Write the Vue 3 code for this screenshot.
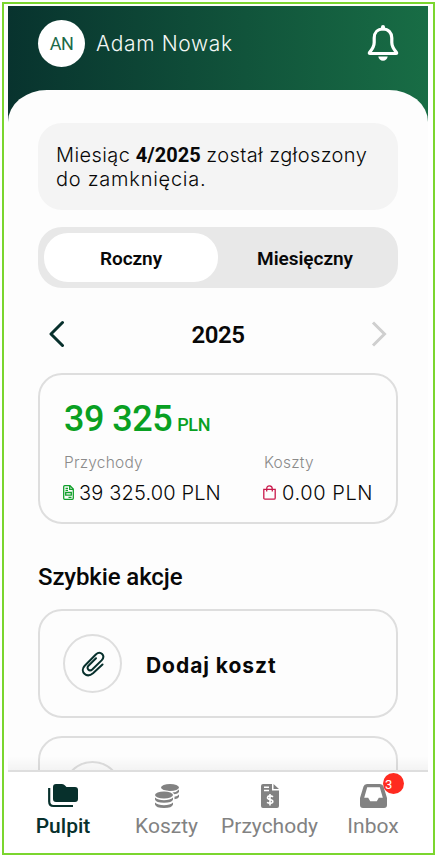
<script setup>
const tabs = [
  { id: 'pulpit', label: 'Pulpit' },
  { id: 'koszty', label: 'Koszty' },
  { id: 'przychody', label: 'Przychody' },
  { id: 'inbox', label: 'Inbox', badge: 3 },
]
</script>

<template>
  <div class="frame">
    <div class="phone">
      <header class="top">
        <div class="avatar">AN</div>
        <div class="name">Adam Nowak</div>
        <svg class="bell" width="32" height="38" viewBox="0 0 32 38" fill="none">
          <path d="M16 5C10.500 5 7.200 8.800 7.200 14V18.500C7.200 23 5 25.500 2.500 28.500Q2 29.500 3 29.500H29Q30 29.500 29.500 28.500C27 25.500 24.800 23 24.800 18.500V14C24.800 8.800 21.500 5 16 5Z" stroke="#fff" stroke-width="3.200" stroke-linejoin="round" />
          <path d="M16 4.500V3" stroke="#fff" stroke-width="4" stroke-linecap="round" />
          <path d="M11.300 32.500H20.700C20.300 35 18.500 36.700 16 36.700S11.700 35 11.300 32.500Z" fill="#fff" />
        </svg>
      </header>

      <main class="sheet">
        <section class="notice">
          <div><span class="n1">Miesiąc</span> <b>4/2025</b> <span class="n2">został zgłoszony</span></div>
          <div><span class="n3">do zamknięcia.</span></div>
        </section>

        <div class="segmented">
          <button class="seg on">Roczny</button>
          <button class="seg">Miesięczny</button>
        </div>

        <div class="year">
          <svg width="16" height="28" viewBox="0 0 16 28" fill="none" stroke="#07302c" stroke-width="3" stroke-linecap="round" stroke-linejoin="round"><path d="M13.500 2.500L2 14L13.500 25.500" /></svg>
          <strong>2025</strong>
          <svg width="16" height="28" viewBox="0 0 16 28" fill="none" stroke="#cfcfcf" stroke-width="3"><path d="M2 2.500L13.500 14L2 25.500" /></svg>
        </div>

        <section class="card summary">
          <div class="total">39 325<small>PLN</small></div>
          <div class="cols">
            <div class="col">
              <div class="label l1">Przychody</div>
              <div class="value">
                <svg width="11" height="15" viewBox="0 0 11 15" fill="none" stroke="#12a02c" stroke-width="1.300"><path d="M1.700.7H7L10.300 4V13.300Q10.300 14.300 9.300 14.300H1.700Q.7 14.300.7 13.300V1.700Q.7.7 1.700.7ZM6.700.7V4.300H10.300M2.500 3.300H5M2.500 5.300H5M2.700 7.500H8.300V10.200H2.700ZM5.500 12.300H8.500" /></svg>
                <span class="v1">39 325.00 PLN</span>
              </div>
            </div>
            <div class="col">
              <div class="label l2">Koszty</div>
              <div class="value">
                <svg width="13" height="15" viewBox="0 0 13 15" fill="none" stroke="#c9184a" stroke-width="1.300"><path d="M.8 4.300H12.200V13Q12.200 14.200 11 14.200H2Q.8 14.200.8 13ZM3.700 6.500V4Q3.700.8 6.500.8T9.300 4V6.500" /></svg>
                <span class="v2">0.00 PLN</span>
              </div>
            </div>
          </div>
        </section>

        <h2>Szybkie akcje</h2>

        <section class="card action">
          <div class="ring">
            <svg width="24" height="26" viewBox="0 0 24 26" fill="none" stroke="#07302c" stroke-width="2" stroke-linecap="round" stroke-linejoin="round"><path d="M21.500 13.500L12 22.200C5.500 27.800-1.500 20.500 3.500 15L14.800 3.500C19.500-.8 25 4.700 20.600 9.400L11.500 18.200C8.200 21.200 4.700 17.200 7.700 14.500L15 7.300" /></svg>
          </div>
          <span class="add">Dodaj koszt</span>
        </section>
        <section class="card action"><div class="ring"></div></section>
      </main>

      <div class="fade"></div>
      <nav class="tabs">
        <div v-for="t in tabs" :key="t.id" class="tab" :class="t.id">
          <svg v-if="t.id === 'pulpit'" width="30" height="24" viewBox="0 0 30 24"><path d="M8 0H14Q16 0 17 1.500L18.500 3H27Q30 3 30 6V15Q30 18 27 18H8Q5 18 5 15V3Q5 0 8 0Z" fill="currentColor" /><path d="M1.200 4V17.500Q1.200 22 5.500 22H25" fill="none" stroke="currentColor" stroke-width="2.200" /></svg>
          <svg v-else-if="t.id === 'koszty'" width="24" height="24" viewBox="0 0 24 24" fill="currentColor">
            <ellipse cx="15" cy="3.500" rx="9" ry="3.500" />
            <ellipse cx="9" cy="11" rx="10" ry="4.500" fill="#fff" />
            <ellipse cx="9" cy="11" rx="9" ry="3.500" />
            <path d="M0 13.500Q3 16.200 9 16.200T18 13.500V15.500Q17 18.800 9 18.800T0 15.500ZM0 18.500Q3 21.200 9 21.200T18 18.500V20.500Q17 24 9 24T0 20.500ZM24 5.500V8Q23 9.700 19.500 10.200L17.500 8.500Q22 8 24 5.500ZM24 10.500V13Q23 14.700 19.500 15.200V12.800Q22.500 12.200 24 10.500Z" />
          </svg>
          <svg v-else-if="t.id === 'przychody'" width="18" height="24" viewBox="0 0 18 24">
            <path d="M2 0H11V6.500H18V22Q18 24 16 24H2Q0 24 0 22V2Q0 0 2 0ZM12.500 0L18 5H12.500Z" fill="currentColor" />
            <path d="M3 3.200H8M3 6.500H8" stroke="#fff" stroke-width="1.500" />
            <path d="M12 12.800C10 11.200 6.500 11.700 6.500 13.700C6.500 16.300 11.800 14.700 11.800 17.500C11.800 19.700 8 19.700 6 18.300M9 10V21.500" stroke="#fff" stroke-width="1.600" fill="none" />
          </svg>
          <svg v-else width="27" height="24" viewBox="0 0 27 24"><path fill-rule="evenodd" d="M7 0H20Q22.800 0 23.500 2.500L27 14V21Q27 24 24 24H3Q0 24 0 21V14L3.500 2.500Q4.200 0 7 0ZM7.200 3.300L4.200 13.800H8.200L10.200 17.300H16.800L18.800 13.800H22.800L19.800 3.300Z" fill="currentColor" /></svg>
          <span class="tl">{{ t.label }}</span>
          <i v-if="t.badge" class="badge">{{ t.badge }}</i>
        </div>
      </nav>
    </div>
  </div>
</template>

<style>
body { margin: 0; background: #fff; }
</style>

<style scoped>
* { box-sizing: border-box; }
.frame { width: 433px; height: 853px; margin: 2px 0 0 2px; border: 2px solid #7bd62f; padding: 2px 5px 0 4px; font-family: Roboto, sans-serif; color: #080808; background: #fff; }
.phone { position: relative; width: 420px; height: 846px; overflow: hidden; display: flex; flex-direction: column; background: linear-gradient(90deg, #08332e, #186d45) top / 100% 120px no-repeat #fff; }
.top { height: 84px; flex: none; display: flex; align-items: center; padding: 0 29px 10px 30px; }
.avatar { width: 47px; height: 47px; border-radius: 50%; background: #fff; color: #1c6a48; display: flex; align-items: center; justify-content: center; font-size: 18px; letter-spacing: -.5px; }
.name { margin-left: 11px; color: #f3f7f5; font: 300 21px Inter, sans-serif; letter-spacing: .65px; white-space: nowrap; }
.bell { margin-left: auto; }
.sheet { flex: 1; min-height: 0; overflow: hidden; background: #fdfdfd; border-radius: 39px 39px 0 0 / 32px 32px 0 0; padding: 33px 30px 0; }
.notice { height: 87px; border-radius: 24px; background: #f4f4f4; padding: 20px 18px; font: 300 20px/24px Inter, sans-serif; white-space: nowrap; }
.notice b { font: 700 20px/24px Roboto, sans-serif; }
.n1, .n2 { letter-spacing: .4px; }
.n3 { letter-spacing: .75px; }
.segmented { margin-top: 17px; height: 61px; padding: 6px; border-radius: 24px; background: #e8e8e8; display: flex; }
.seg { width: 174px; border: 0; padding: 2px 0 0; border-radius: 24px; background: none; color: #080808; font: 600 19px Roboto, sans-serif; letter-spacing: -.05px; }
.seg.on { background: #fff; }
.year { height: 85px; padding: 6px 11px 0; display: flex; align-items: center; justify-content: space-between; }
.year strong { font-size: 24px; font-weight: 600; letter-spacing: -.4px; padding-top: 2px; }
.card { border: 2px solid #dedede; border-radius: 24px; }
.summary { height: 151px; padding: 24px 24px 0; }
.total { color: #09a022; font-size: 36px; line-height: 40px; font-weight: 500; letter-spacing: -.5px; white-space: nowrap; }
.total small { font-size: 18px; letter-spacing: -.4px; margin-left: 5px; }
.cols { display: flex; margin-top: 7px; }
.col { width: 200px; flex: none; white-space: nowrap; }
.col + .col { width: 110px; }
.label { color: #8b8b8b; font: 300 15.5px/22px Inter, sans-serif; letter-spacing: .2px; }
.value { height: 37px; margin-left: -1px; display: flex; align-items: center; gap: 5px; font: 300 20px Inter, sans-serif; }
.v1 { letter-spacing: .15px; }
.v2 { letter-spacing: .6px; margin-left: 1px; }
h2 { margin: 39px 0 18px; font-size: 24px; line-height: 28px; font-weight: 500; letter-spacing: -.12px; }
.action { height: 109px; padding: 0 23px; margin-bottom: 18px; display: flex; align-items: center; }
.ring { width: 59px; height: 59px; flex: none; border: 2px solid #dedede; border-radius: 50%; display: flex; align-items: center; justify-content: center; }
.add { margin-left: 24px; padding-top: 3px; font: 700 21px Inter, sans-serif; letter-spacing: .95px; }
.fade { height: 14px; margin-top: -14px; flex: none; z-index: 1; background: linear-gradient(transparent, rgba(0, 0, 0, .04)); }
.tabs { position: relative; height: 82px; flex: none; border-top: 2px solid #dedede; background: #fff; display: grid; grid-template-columns: 110px 97px 109px 98px; }
.tab { position: relative; display: flex; flex-direction: column; align-items: center; padding-top: 12px; color: #828282; }
.tl { margin-top: 6px; font-size: 21px; line-height: 24px; }
.pulpit { color: #07302c; }
.pulpit .tl { font-weight: 500; }
.badge { position: absolute; left: 59px; top: 1px; width: 21px; height: 21px; border-radius: 50%; background: #ff2b20; color: #fff; font: normal 13px/23px Roboto, sans-serif; padding-left: 2px; }
</style>
